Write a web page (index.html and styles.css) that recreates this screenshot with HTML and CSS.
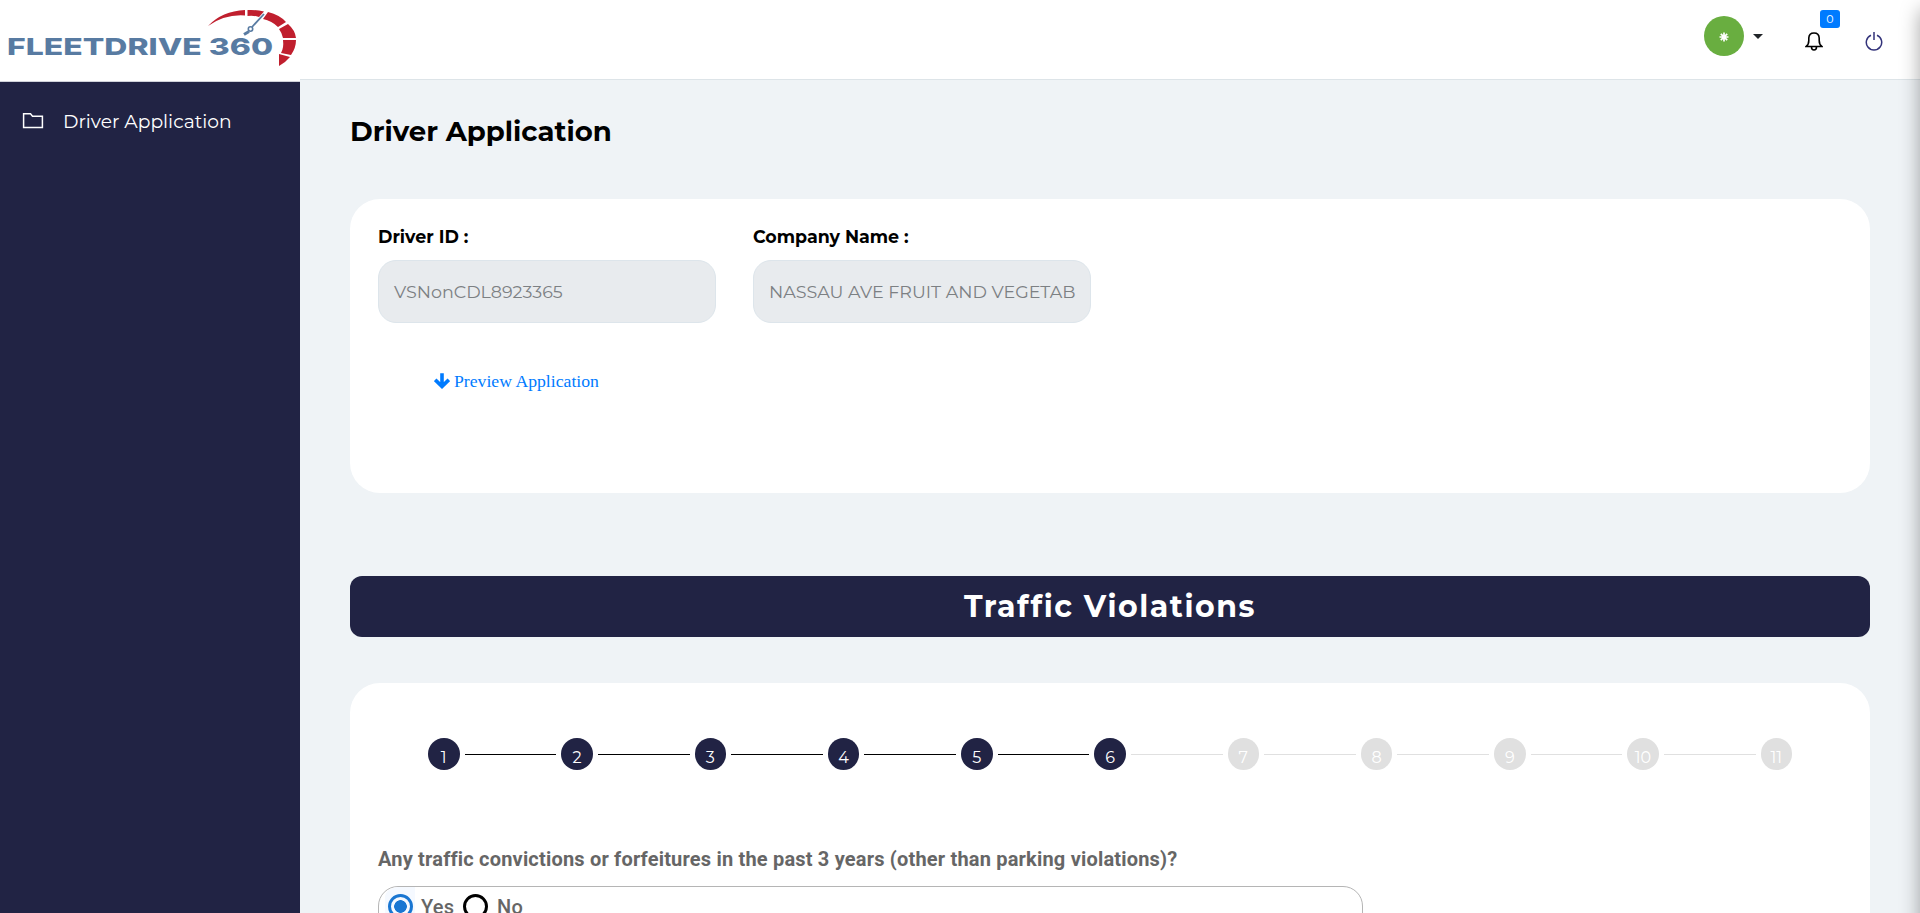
FILE: index.html
```html
<!DOCTYPE html>
<html lang="en">
<head>
<meta charset="utf-8">
<title>Driver Application</title>
<link rel="stylesheet" href="styles.css">
</head>
<body>
<div class="app">
  <aside class="side">
    <div class="brand">
      <svg width="300" height="81" viewBox="0 0 300 81">
        <text class="logo-text" x="7" y="55" textLength="266" lengthAdjust="spacingAndGlyphs">FLEETDRIVE 360</text>
        <g fill="#c01f2e">
          <path d="M208 26Q222 11 245 10V15.500Q225 14 208 26Z"/>
          <path d="M247.500 10Q256 9.500 264 11.500L259 17Q253 15 247.500 16Z"/>
          <path d="M268 12Q280 15 286 22L278 27Q272 21 263 19Z"/>
          <path d="M288 24Q295 30 296 38H283Q282 33 279 29Z"/>
          <path d="M296 40Q296 48 291 55L281 53Q284 48 283 40Z"/>
          <path d="M290 57Q286 62 279 66V54Z"/>
        </g>
        <g stroke="#587ba2" fill="none"><path d="M264 14L252 27" stroke-width="1.800"/><circle cx="250.500" cy="29" r="2.200" stroke-width="1.600"/><path d="M249 31.500L244 34.500" stroke-width="3"/></g>
      </svg>
    </div>
    <nav class="menu">
      <a class="menu-item">
        <svg width="22" height="18" viewBox="0 0 22 18" fill="none" stroke="#fff" stroke-width="1.500"><path d="M1.600 15.600V1.800H8.500L10.500 4.200H20.400V15.600Z"/></svg>
        <span>Driver Application</span>
      </a>
    </nav>
  </aside>
  <div class="main">
    <header class="top">
      <div class="avatar"><svg width="10" height="10" viewBox="0 0 10 10" stroke="#fff" stroke-width="1.700"><path d="M5 .5V9.500M.5 5H9.500M1.800 1.800L8.200 8.200M8.200 1.800L1.800 8.200"/></svg></div>
      <i class="caret"></i>
      <div class="bell">
        <svg width="18" height="19" viewBox="0 0 18 19" fill="none" stroke="#000" stroke-width="1.600"><path d="M1.200 14.500Q3.800 12.500 3.800 8.500V6Q4 1 9 1T14.200 6V8.500Q14.200 12.500 16.800 14.500ZM6.500 15Q6.500 18 9 18T11.500 15"/></svg>
        <span class="badge">0</span>
      </div>
      <svg class="power" width="18" height="19" viewBox="0 0 18 19" fill="none" stroke="#33337a" stroke-width="1.500"><path d="M6 3.200A7.700 7.700 0 1 0 12 3.200M9 0V8"/></svg>
    </header>
    <main class="content">
      <h1 class="title">Driver Application</h1>
      <section class="card info">
        <div class="fields">
          <label class="field"><b>Driver ID :</b><span class="input">VSNonCDL8923365</span></label>
          <label class="field"><b>Company Name :</b><span class="input">NASSAU AVE FRUIT AND VEGETAB</span></label>
        </div>
        <a class="preview"><svg width="16" height="16" viewBox="0 0 16 16" fill="none" stroke="#007bff" stroke-width="3.600"><path d="M8 .3V13M1.200 6.800L8 13.400L14.800 6.800"/></svg><span>Preview Application</span></a>
      </section>
      <h2 class="banner">Traffic Violations</h2>
      <section class="card form">
        <div class="steps">
          <span class="step on">1</span><i class="line on"></i><span class="step on">2</span><i class="line on"></i><span class="step on">3</span><i class="line on"></i><span class="step on">4</span><i class="line on"></i><span class="step on">5</span><i class="line on"></i><span class="step on">6</span><i class="line"></i><span class="step">7</span><i class="line"></i><span class="step">8</span><i class="line"></i><span class="step">9</span><i class="line"></i><span class="step">10</span><i class="line"></i><span class="step">11</span>
        </div>
        <p class="question">Any traffic convictions or forfeitures in the past 3 years (other than parking violations)?</p>
        <div class="radios"><span class="halo"><i class="radio checked"></i></span><span class="opt-yes">Yes</span><i class="radio"></i><span class="opt-no">No</span></div>
      </section>
    </main>
  </div>
  <div class="drawer"></div>
</div>
</body>
</html>
```
FILE: styles.css
```css
* { box-sizing: border-box; }
body { margin: 0; background: #eff3f6; font-family: Montserrat, Inter, sans-serif; }
.app { display: flex; height: 913px; overflow: hidden; position: relative; }
.side { width: 300px; flex: none; background: #212344; }
.brand { height: 82px; background: #fff; border-bottom: 1px solid #d0d2da; }
.brand svg { display: block; }
.logo-text { font: 800 23.500px Inter, sans-serif; fill: #587ba2; }
.menu-item { display: flex; align-items: center; height: 78px; padding-left: 22px; gap: 19px; color: #fff; font-size: 18.700px; }
.main { flex: 1; min-width: 0; }
.top { display: flex; height: 80px; background: #fff; border-bottom: 1px solid #dde4e8; padding-left: 1404px; }
.avatar { width: 40px; height: 40px; margin-top: 16px; border-radius: 50%; background: #69ae40; display: flex; align-items: center; justify-content: center; padding: 2px 1px 0 0; flex: none; }
.caret { margin: 34px 0 0 9px; width: 10px; height: 5px; border: 5px solid transparent; border-top-color: #212529; border-bottom: 0; flex: none; }
.bell { position: relative; margin: 32px 0 0 42px; width: 18px; height: 19px; flex: none; }
.badge { position: absolute; left: 15px; top: -22px; width: 20px; height: 18px; border-radius: 3px; background: #007bff; color: #fff; font-size: 11px; line-height: 18px; text-align: center; }
.power { margin: 32px 0 0 42px; flex: none; }
.content { padding: 0 50px; }
.title { margin: 0; height: 119px; padding-top: 33px; line-height: 36px; font-size: 27.500px; font-weight: 700; }
.card { background: #fff; border-radius: 30px; }
.info { height: 294px; padding: 28px 28px 0; }
.fields { display: flex; gap: 37px; }
.field { width: 338px; }
.field b { display: block; height: 33px; line-height: 20px; font-size: 17.450px; font-weight: 700; white-space: nowrap; }
.input { display: flex; align-items: center; height: 63px; border: 1px solid #dde5eb; border-radius: 18px; background: #e8ebee; color: #7c8083; padding: 0 14px 0 15px; font-size: 17.500px; white-space: nowrap; overflow: hidden; }
.preview { display: flex; align-items: center; gap: 4px; margin: 46px 0 0 56px; color: #007bff; font: 17.700px/24px "Liberation Serif", serif; }
.banner { margin: 83px 0 46px; height: 61px; border-radius: 12px; background: #212344; color: #fff; text-align: center; line-height: 61px; font-size: 30px; font-weight: 700; letter-spacing: 1.550px; }
.form { height: 400px; padding: 55px 28px 0; }
.steps { display: flex; height: 32px; margin: 0 50px; }
.step { width: 31.500px; height: 32px; border-radius: 50%; flex: none; background: #e0e0e0; color: #fff; font-size: 16px; line-height: 40px; text-align: center; }
.step.on { background: #212344; }
.line { flex: 1; height: 1px; margin: 16px 5px 0; background: #e0e0e0; }
.line.on { background: #000; }
.question { margin: 76px 0 0; height: 40px; font: 700 20px/26px Roboto, sans-serif; letter-spacing: .00938em; color: #666; white-space: nowrap; }
.radios { display: flex; width: 985px; height: 58px; border: 1px solid #b5b5b5; border-radius: 20px; padding-left: 6px; color: #666; font: 500 20px/41px Roboto, sans-serif; letter-spacing: .00938em; }
.halo { background: #f5f9ff; border-top-left-radius: 14px 10px; width: 30px; height: 42px; padding-left: 3px; flex: none; }
.radio { display: block; width: 25px; height: 25px; margin-top: 7px; border: 3px solid #000; border-radius: 50%; flex: none; }
.radio.checked { border-color: #1976d2; background: radial-gradient(#1976d2 6px, #f5f9ff 6.600px); }
.opt-yes { width: 48px; padding-left: 6px; flex: none; }
.opt-no { padding-left: 9px; }
/* Off-canvas drawer: only its shadow reaches the right edge */
.drawer { position: absolute; left: 1920px; top: 10px; width: 60px; height: 940px; box-shadow: 0 0 20px rgba(0, 0, 0, .35); }
```
